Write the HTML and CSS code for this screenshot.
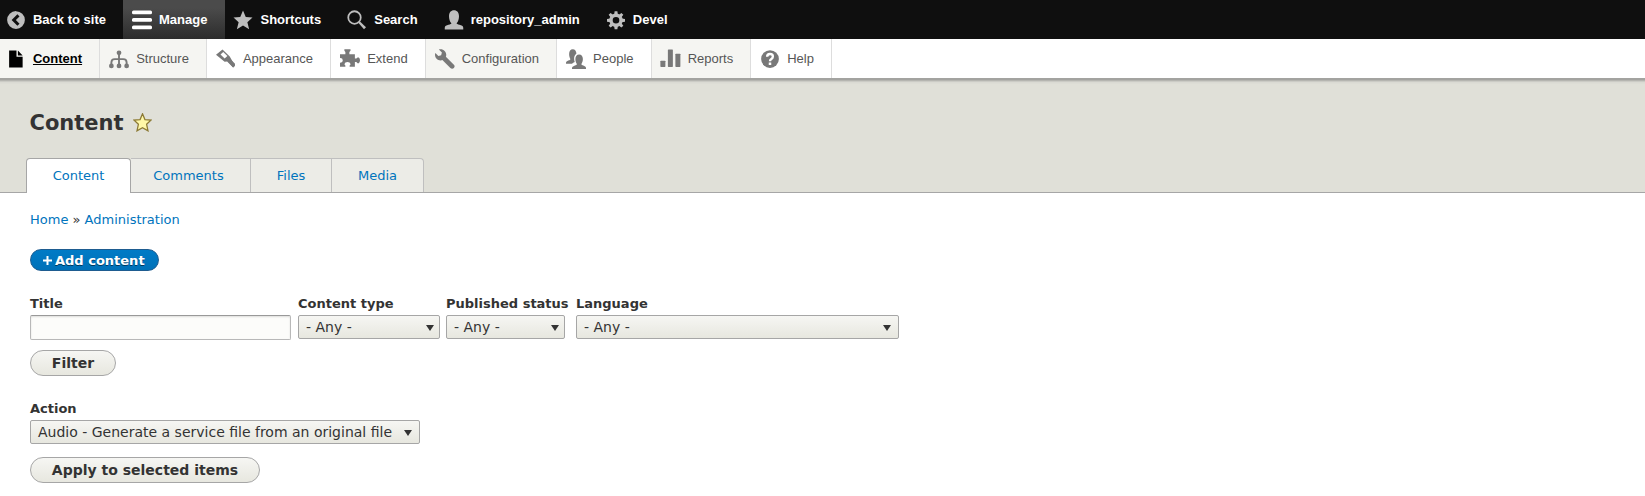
FILE: index.html
```html
<!DOCTYPE html>
<html lang="en">
<head>
<meta charset="utf-8">
<title>Content</title>
<link rel="stylesheet" href="styles.css">
</head>
<body>
<nav class="bar">
  <a class="item first"><svg class="icon" viewBox="0 0 16 16"><path fill-rule="evenodd" d="M8 .9a7.1 7.1 0 1 0 0 14.2A7.1 7.1 0 0 0 8 .9zM9.1 12.6 4.5 8l4.6-4.6 1.7 1.7L7.9 8l2.900 2.900z"/></svg>Back to site</a>
  <a class="item active"><svg class="icon" viewBox="0 0 16 16"><rect y="0.400" width="16" height="3" rx="1.2"/><rect y="6.400" width="16" height="3" rx="1.2"/><rect y="12.400" width="16" height="3" rx="1.2"/></svg>Manage</a>
  <a class="item"><svg class="icon" viewBox="0 0 16 16"><path d="M8 .3 10.2 5.6 15.6 6 11.5 9.8 12.9 15.4 8 12.3 3.1 15.4 4.5 9.8 .4 6 5.8 5.6z"/></svg>Shortcuts</a>
  <a class="item"><svg class="icon" viewBox="0 0 16 16"><circle cx="6" cy="6" r="5" fill="none" stroke="#bebebe" stroke-width="1.4"/><path d="m9 10.2 1.2-1.2 5 4.7-1.6 1.7z"/></svg>Search</a>
  <a class="item"><svg class="icon" viewBox="0 0 16 16"><path d="M.6 15.6v-1.5c0-1.4 1.4-1.9 3-2.3 1.500-.4 2.300-.6 2.300-1.200C4.700 9.300 4 7.100 4 4.900 4 1.900 5.500.1 8 .1s4 1.800 4 4.800c0 2.200-.7 4.400-1.900 5.700 0 .6.8.8 2.300 1.200 1.600.4 3 .9 3 2.300v1.500z"/></svg>repository_admin</a>
  <a class="item"><svg class="icon" viewBox="0 0 16 16"><g transform="translate(8 8.2)"><circle r="4" fill="none" stroke="#bebebe" stroke-width="2.700"/><path d="M-1.100-7.200h2.200l.4 2.700h-3zM-1.100 7.200h2.200l.4-2.700h-3zM-7.200-1.100v2.200l2.700.4v-3zM7.200-1.100v2.200l-2.700.4v-3z"/><path transform="rotate(45)" d="M-1.100-7.200h2.200l.4 2.700h-3zM-1.100 7.200h2.200l.4-2.700h-3zM-7.200-1.100v2.200l2.700.4v-3zM7.200-1.100v2.200l-2.700.4v-3z"/></g></svg>Devel</a>
</nav>
<nav class="tray">
  <a class="item first current tint"><svg class="icon" viewBox="0 0 16 16"><path d="M2.500 1.200h5.900v5h4.900v8.600H2.500zM9.500 1.200l3.800 3.900H9.500z"/></svg><span>Content</span></a>
  <a class="item tint"><svg class="icon" viewBox="0 0 16 16"><circle cx="8" cy="3" r="1.900"/><circle cx="1.900" cy="13.500" r="1.900"/><circle cx="8" cy="13.500" r="1.900"/><circle cx="14.100" cy="13.500" r="1.900"/><path d="M8 4v9M1.900 13v-2.200q0-2.700 2.700-2.700h6.800q2.700 0 2.700 2.700V13" fill="none" stroke="#787878" stroke-width="1.500"/></svg>Structure</a>
  <a class="item"><svg class="icon" viewBox="0 0 16 16"><path fill-rule="evenodd" d="M5.200.3 11 5.900 15.100 13.300 13.700 14.800 8.900 10 6.900 10.200 0 4.500zM5.800 2.400 3.600 4.400 6.900 7.600 9.100 5.600z" /><path d="m8.500 8.500 1.700-1.700 5 5-.1 1.500-1.400 1.500z"/></svg>Appearance</a>
  <a class="item"><svg class="icon" viewBox="0 0 16 16"><path d="M0 4.100h4.300V2.300L3.500 1.400V.1h4.900v1.300l-.9.900v1.800h4.400v3.500h1.200l.9-.9h1.100q.9 1 .9 2.300t-.9 2.300H14l-.9-.9h-1.200v3.700H7.700v-1l.8-.9q-.4-1.800-2.500-1.800t-2.500 1.800l.8.9v1H0V11q2.200-.1 2.200-2T0 7.200z"/></svg>Extend</a>
  <a class="item tint"><svg class="icon" viewBox="0 0 16 16"><path d="M15.100 12.600 8.700 6.200c.2-.5.300-1 .3-1.600C9 2.100 7 .1 4.500.1c-.5 0-1 .1-1.400.3l2.400 2.400L4.900 5l-2.200.6L.3 3.200C.1 3.600 0 4.100 0 4.600c0 2.500 2 4.500 4.500 4.500.5 0 1-.1 1.400-.3l6.400 6.300c.8.800 2 .8 2.800 0s.8-1.800 0-2.500z"/></svg>Configuration</a>
  <a class="item"><svg class="icon" viewBox="0 0 16 16"><path d="M0 11.800v-1q0-1 1.800-1.600C3 8.800 3.500 8.600 3.500 7.900 2.900 7 2.500 5.600 2.500 4 2.500 1.500 3.600.1 5.400.1S8.300 1.500 8.300 3.800C6.900 4.800 6.500 6.200 6.500 7.700q0 1.400.5 2.600-1.400.5-2.200 1.500z"/><path d="M4.800 16v-1.100q0-1 1.900-1.600c1.500-.4 2-.6 2-1.300C8 11 7.500 9.700 7.500 8c0-2.300 1.100-3.700 3-3.700s3 1.400 3 3.700c0 1.700-.5 3-1.200 4 0 .7.500.9 2 1.300q1.700.6 1.700 1.600V16z"/></svg>People</a>
  <a class="item tint"><svg class="icon" viewBox="0 0 16 16"><g transform="translate(-.5 .3)"><rect y="9" width="4" height="5" rx=".5"/><rect x="6" y="0" width="4" height="14" rx=".5"/><rect x="12" y="3.400" width="4" height="10.600" rx=".5"/></g></svg>Reports</a>
  <a class="item"><svg class="icon" viewBox="0 0 16 16"><circle cx="8" cy="8" r="7.100"/><path d="M5.700 6.200Q5.700 4 8 4t2.300 2q0 1.200-1.200 2T8 9.800" fill="none" stroke="#fff" stroke-width="1.900"/><rect x="7" y="10.800" width="2" height="2" fill="#fff"/></svg>Help</a>
</nav>
<header class="header">
  <h1>Content<svg class="fav" viewBox="0 0 18 18"><path d="M9 .8 11.300 6.200 17.100 6.700 12.900 10.700 14.200 16.900 9 13.900 3.800 16.900 5.100 10.700 .9 6.700 6.700 6.200z"/></svg></h1>
  <div class="tabs">
    <a class="tab selected">Content</a><a class="tab comments">Comments</a><a class="tab files">Files</a><a class="tab media">Media</a>
  </div>
</header>
<main class="page">
  <div class="crumbs"><a>Home</a> » <a>Administration</a></div>
  <a class="add"><svg class="plus" viewBox="0 0 9 9"><path d="M3.500 0h2v3.500H9v2H5.500V9h-2V5.500H0v-2h3.500z"/></svg>Add content</a>
  <div class="filters">
    <div class="field title"><label>Title</label><input class="text" type="text"></div>
    <div class="field type"><label>Content type</label><div class="select">- Any -</div></div>
    <div class="field status"><label>Published status</label><div class="select">- Any -</div></div>
    <div class="field language"><label>Language</label><div class="select wide">- Any -</div></div>
  </div>
  <button class="button filter">Filter</button>
  <div class="field action"><label>Action</label><div class="select wide">Audio - Generate a service file from an original file</div></div>
  <button class="button apply">Apply to selected items</button>
</main>
</body>
</html>
```
FILE: styles.css
```css
* { box-sizing: border-box; }
body {
  margin: 0;
  height: 496px;
  overflow: hidden;
  background: #fff;
  color: #333;
  font-family: "DejaVu Sans", sans-serif;
  font-size: 13px;
}
.bar, .tray {
  display: flex;
  height: 39px;
  font-family: "Liberation Sans", sans-serif;
  line-height: 13px;
}
.bar { background: #0f0f0f; color: #fff; font-weight: bold; }
.bar .item {
  display: flex;
  align-items: center;
  padding: 0 17.33px 0 8.67px;
}
.item .icon { width: 20px; height: 20px; margin-right: 7.08px; flex: none; overflow: visible; }
.bar .icon { fill: #bebebe; }
.bar .active { background: linear-gradient(rgba(255,255,255,.25) 20%, rgba(255,255,255,.12)); }
.bar .active .icon { fill: #fff; }
.bar .item.first, .tray .item.first { padding-left: 5.9px; }
.tray {
  background: #fff;
  color: #565656;
}
.tray .item {
  display: flex;
  align-items: center;
  border-right: 1px solid #ddd;
  padding: 0 17.33px 0 8.67px;
}
.tray .tint { background: #f5f5f2; }
.tray .icon { fill: #787878; }
.tray .current { color: #000; font-weight: bold; text-decoration: underline; }
.tray .current .icon { fill: #000; }
.header {
  height: 115px;
  padding: 32px 26px 0;
  background: linear-gradient(#a3a3a0 0 2px, #b5b5b0 2px 3px, #cbcbc5 3px 4px, #dadad3 4px 5px, #e0e0d8 6px);
  border-bottom: 1px solid #a6a6a6;
}
h1 {
  display: flex;
  align-items: center;
  height: 27px;
  margin: 0;
  padding-left: 3.500px;
  font-size: 21px;
  line-height: 27px;
}
.fav { width: 19px; height: 19px; margin: -2px 0 0 9px; fill: #fff8a8; stroke: #8c7a35; stroke-width: 1.200; }
.tabs { display: flex; margin-top: 21px; }
.tab {
  height: 34px;
  border: 1px solid #bfbfbf;
  border-width: 1px 1px 0 0;
  background: #ecece7;
  color: #0074bd;
  text-align: center;
  line-height: 34px;
}
.tab.selected {
  width: 105px;
  height: 35px;
  border: 1px solid #a6a6a6;
  border-bottom: 0;
  border-radius: 4px 4px 0 0;
  background: #fff;
}
.comments { width: 120px; padding-right: 4px; }
.files { width: 81px; }
.media { width: 92px; border-radius: 0 4px 0 0; }
.page { padding: 17px 30px; }
.crumbs { line-height: 20px; }
.crumbs a { color: #0074bd; }
.add {
  display: flex;
  align-items: center;
  width: 129px;
  height: 22px;
  margin-top: 19px;
  padding-left: 12px;
  border: 1px solid #1e5c90;
  border-radius: 11px;
  background: linear-gradient(#007bc6, #0071b8);
  color: #fff;
  font-weight: bold;
  text-shadow: 0 1px rgba(0,0,0,.5);
}
.plus { width: 9px; height: 9px; margin-right: 3px; fill: #fff; }
.filters { display: flex; margin-top: 24px; }
.field { display: flex; flex-direction: column; }
label { height: 20px; line-height: 18px; font-weight: bold; white-space: nowrap; }
.title { width: 261px; margin-right: 7px; }
.type { width: 142px; margin-right: 6px; }
.status { width: 119px; margin-right: 11px; }
.language { width: 323px; }
.text {
  width: 100%;
  height: 25px;
  border: 1px solid #b8b8b8;
  border-top-color: #999;
  border-radius: 2px;
  background: #fcfcfa;
  box-shadow: inset 0 1px 2px rgba(0,0,0,.125);
}
.select {
  display: flex;
  align-items: center;
  justify-content: space-between;
  height: 24px;
  padding: 0 5px 0 7px;
  border: 1px solid #a6a6a6;
  border-radius: 2px;
  background: linear-gradient(#f6f6f3, #e7e7df);
  font-size: 14px;
  white-space: nowrap;
}
.select.wide { padding-right: 7px; }
.select::after {
  content: "";
  margin-top: 2px;
  border: solid transparent;
  border-width: 6px 4.500px 0;
  border-top-color: #333;
}
.button {
  display: block;
  height: 26px;
  padding: 0;
  border: 1px solid #a6a6a6;
  border-radius: 13px;
  background: linear-gradient(#f6f6f3, #e7e7df);
  color: #333;
  font: bold 14px "DejaVu Sans", sans-serif;
}
.filter { width: 86px; margin-top: 10px; }
.action { width: 390px; margin-top: 24px; }
.apply { width: 230px; margin-top: 13px; }
```
